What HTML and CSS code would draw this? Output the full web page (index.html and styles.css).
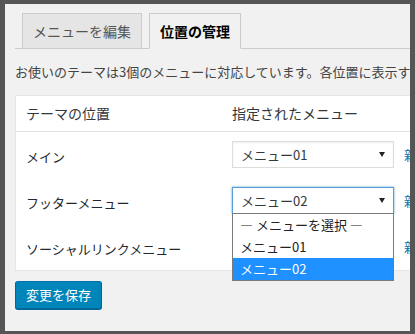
FILE: index.html
```html
<!DOCTYPE html>
<html lang="ja">
<head>
  <meta charset="UTF-8">
  <title>メニュー - 位置の管理</title>
  <link rel="stylesheet" href="styles.css">
</head>
<body>

<div class="frame">
  <div class="wrap">
    <nav class="nav-tabs">
      <a href="#" class="nav-tab">メニューを編集</a>
      <a href="#" class="nav-tab active">位置の管理</a>
    </nav>

    <p class="intro">お使いのテーマは3個のメニューに対応しています。各位置に表示するメニューを選択してください。</p>

    <div class="locations">
      <div class="cell head">テーマの位置</div>
      <div class="cell head">指定されたメニュー</div>

      <div class="cell label">メイン</div>
      <div class="cell">
        <div class="pick">
          <div class="select">メニュー01<span class="arrow"></span></div>
          <a href="#" class="link">新規メニューを使用</a>
        </div>
      </div>

      <div class="cell label">フッターメニュー</div>
      <div class="cell">
        <div class="pick">
          <div class="select focus">メニュー02<span class="arrow"></span>
            <ul class="options">
              <li>— メニューを選択 —</li>
              <li>メニュー01</li>
              <li class="selected">メニュー02</li>
            </ul>
          </div>
          <a href="#" class="link">新規メニューを使用</a>
        </div>
      </div>

      <div class="cell label">ソーシャルリンクメニュー</div>
      <div class="cell">
        <div class="pick">
          <div class="select">— メニューを選択 —<span class="arrow"></span></div>
          <a href="#" class="link">新規メニューを使用</a>
        </div>
      </div>
    </div>

    <button class="save">変更を保存</button>
  </div>
</div>

</body>
</html>
```

FILE: styles.css
```css
body {
  margin: 0;
  background: #555555;
  font-family: "Noto Sans CJK JP", "Noto Sans", sans-serif;
  font-size: 13px;
  color: #23282d;
}
.frame {
  margin: 4px 5px 0 5px;
  height: 327px;
  background: #f1f1f1;
  overflow: hidden;
}
.wrap {
  padding: 0 10px;
  width: 460px;
}
.nav-tabs {
  display: flex;
  padding-top: 9px;
  border-bottom: 1px solid #cccccc;
}
.nav-tab {
  margin-left: 7px;
  margin-bottom: -1px;
  padding: 5px 10px;
  border: 1px solid #cccccc;
  background: #e5e5e5;
  color: #555555;
  font-size: 14px;
  line-height: 24px;
  text-decoration: none;
}
.nav-tab.active {
  background: #f1f1f1;
  border-bottom-color: #f1f1f1;
  color: #000000;
  font-weight: bold;
}
.intro {
  margin: 13px 0;
  line-height: 19.5px;
  color: #444444;
  white-space: nowrap;
}
.locations {
  display: grid;
  grid-template-columns: 206px 1fr;
  background: #ffffff;
  border: 1px solid #e5e5e5;
}
.cell {
  padding: 9px 10px 10px;
}
.cell.head {
  padding: 8px 10px;
  font-size: 14px;
  line-height: 19px;
  color: #32373c;
  border-bottom: 1px solid #e1e1e1;
}
.cell.label {
  padding-top: 15px;
  line-height: 19px;
  color: #23282d;
}
.pick {
  display: flex;
  align-items: center;
}
.select {
  position: relative;
  box-sizing: border-box;
  width: 162px;
  height: 27px;
  padding: 0 8px;
  border: 1px solid #dddddd;
  box-shadow: inset 0 1px 2px rgba(0, 0, 0, 0.07);
  background: #ffffff;
  line-height: 25px;
  color: #32373c;
  white-space: nowrap;
}
.select.focus {
  border-color: #5b9dd9;
  box-shadow: 0 0 2px rgba(30, 140, 190, 0.8);
}
.arrow {
  position: absolute;
  right: 8px;
  top: 10px;
  border-left: 3px solid transparent;
  border-right: 3px solid transparent;
  border-top: 5px solid #222222;
}
.link {
  margin-left: 10px;
  color: #0073aa;
  text-decoration: none;
  white-space: nowrap;
}
.options {
  position: absolute;
  top: 100%;
  left: -1px;
  width: 162px;
  margin: 0;
  padding: 0;
  list-style: none;
  background: #ffffff;
  border: 1px solid #7a7a7a;
  box-sizing: border-box;
  z-index: 2;
}
.options li {
  height: 22px;
  padding-left: 7px;
  line-height: 22px;
  color: #222222;
}
.options li.selected {
  background: #1e90ff;
  color: #ffffff;
}
.save {
  margin-top: 10px;
  height: 28px;
  padding: 0 10px;
  border: 1px solid #0073aa;
  border-color: #0073aa #006799 #006799;
  border-radius: 3px;
  background: #0085ba;
  box-shadow: 0 1px 0 #006799;
  color: #ffffff;
  font-family: inherit;
  font-size: 13px;
  line-height: 26px;
}
```
